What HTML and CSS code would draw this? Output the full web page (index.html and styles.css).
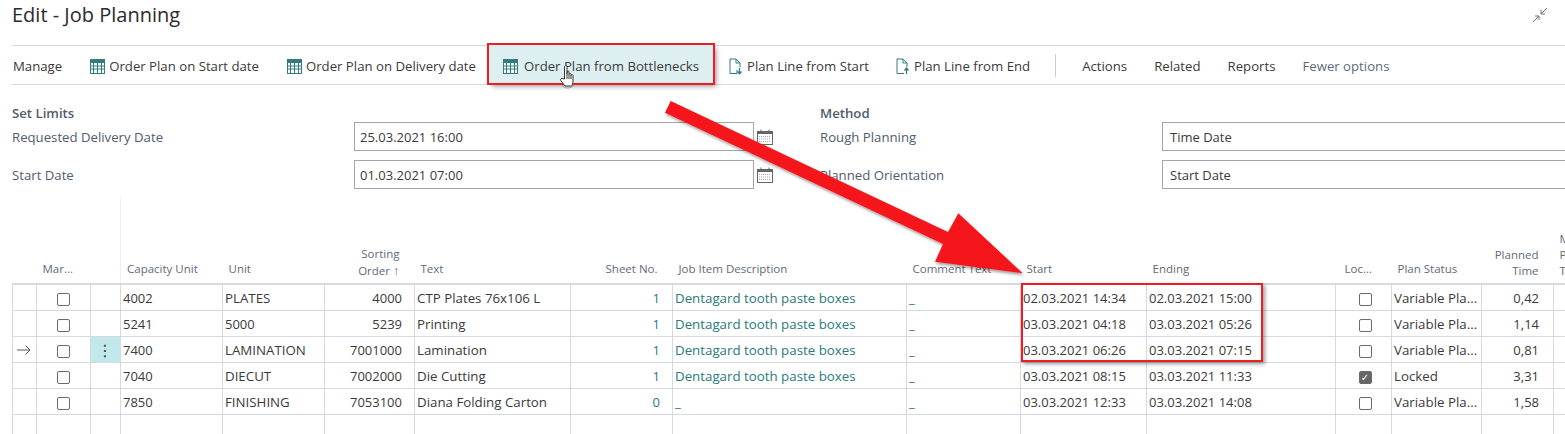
FILE: index.html
```html
<!DOCTYPE html>
<html lang="en">
<head>
    <meta charset="UTF-8">
    <meta name="viewport" content="width=device-width, initial-scale=1.0">
    <title>Edit - Job Planning</title>
    <link rel="stylesheet" href="styles.css">
</head>
<body>
    <div class="page">
        <header class="title-bar">
            <h1>Edit - Job Planning</h1>
            <svg class="collapse" width="18" height="18" viewBox="0 0 18 18">
                <path d="M10 8 L16 2 M10 4 V8 H14 M8 10 L2 16 M4 10 H8 V14" fill="none" stroke="#777" stroke-width="1"/>
            </svg>
        </header>

        <nav class="toolbar">
            <span class="tool tool-wide">Manage</span>
            <span class="tool tool-wide">
                <svg class="icon" width="15" height="15" viewBox="0 0 15 15"><use href="#grid"/></svg>
                Order Plan on Start date
            </span>
            <span class="tool tool-wide">
                <svg class="icon" width="15" height="15" viewBox="0 0 15 15"><use href="#grid"/></svg>
                Order Plan on Delivery date
            </span>
            <span class="tool tool-active">
                <svg class="icon" width="15" height="15" viewBox="0 0 15 15"><use href="#grid"/></svg>
                Order Plan from Bottlenecks
                <svg class="hand" width="18" height="26" viewBox="0 0 18 26">
                    <path d="M5.500 15 V3 C5.500 1 8 1 8 3 V10 V8 C8 6.500 10 6.500 10 8 V10.500 C10 9.200 12 9.200 12 10.500 V11.500 C12 10.400 14 10.400 14 11.500 V17 C14 20 13 21 12.500 22 H6 L1.800 16.500 C1 15 3 13.500 4 14.700 Z" fill="#fff" stroke="#333" stroke-width="1"/>
                    <path d="M8 10 V15 M10 10.500 V15 M12 11.500 V15" stroke="#333" stroke-width="1" fill="none"/>
                    <path d="M3 21 C5 25 12 25 15 21" stroke="#9a9a9a" stroke-width="1" fill="none"/>
                </svg>
            </span>
            <span class="tool">
                <svg class="icon" width="14" height="17" viewBox="0 0 14 17">
                    <path d="M8 12 V15.500 H1 V1 H7 L11 5 V9 M7 1 V5 H11" fill="none" stroke="#2f7d80" stroke-width="1"/>
                    <path d="M10.500 10 V15.500 M8.500 13.500 L10.500 15.800 L12.500 13.500" fill="none" stroke="#2f7d80" stroke-width="1.300"/>
                </svg>
                Plan Line from Start
            </span>
            <span class="tool">
                <svg class="icon" width="14" height="17" viewBox="0 0 14 17">
                    <path d="M8 15.500 H1 V1 H7 L11 5 V9 M7 1 V5 H11" fill="none" stroke="#2f7d80" stroke-width="1"/>
                    <path d="M10.500 16 V10.500 M8.500 12.500 L10.500 10 L12.500 12.500" fill="none" stroke="#2f7d80" stroke-width="1.300"/>
                </svg>
                Plan Line from End
            </span>
            <span class="tool-sep"></span>
            <span class="tool">Actions</span>
            <span class="tool">Related</span>
            <span class="tool">Reports</span>
            <span class="tool tool-muted">Fewer options</span>
        </nav>

        <section class="limits">
            <div class="group">
                <h2>Set Limits</h2>
                <div class="field">
                    <label>Requested Delivery Date</label>
                    <div class="input">25.03.2021 16:00</div>
                    <svg class="cal" width="18" height="18" viewBox="0 0 18 18"><use href="#calendar"/></svg>
                </div>
                <div class="field">
                    <label>Start Date</label>
                    <div class="input">01.03.2021 07:00</div>
                    <svg class="cal" width="18" height="18" viewBox="0 0 18 18"><use href="#calendar"/></svg>
                </div>
            </div>
            <div class="group">
                <h2>Method</h2>
                <div class="field">
                    <label>Rough Planning</label>
                    <div class="input input-wide">Time Date</div>
                </div>
                <div class="field">
                    <label>Planned Orientation</label>
                    <div class="input input-wide">Start Date</div>
                </div>
            </div>
        </section>

        <table class="lines">
            <colgroup>
                <col class="c24"><col class="c54"><col class="c30"><col class="c102"><col class="c102">
                <col class="c90"><col class="c156"><col class="c102"><col class="c234"><col class="c114">
                <col class="c126"><col class="c189"><col class="c56"><col class="c90"><col class="c72"><col class="c100">
            </colgroup>
            <thead>
                <tr>
                    <th></th>
                    <th>Mar...</th>
                    <th class="edge"></th>
                    <th>Capacity Unit</th>
                    <th>Unit</th>
                    <th class="num multi">Sorting<br>Order <span class="sort">↑</span></th>
                    <th>Text</th>
                    <th class="num">Sheet No.</th>
                    <th>Job Item Description</th>
                    <th>Comment Text</th>
                    <th>Start</th>
                    <th>Ending</th>
                    <th class="th-loc">Loc...</th>
                    <th>Plan Status</th>
                    <th class="num multi">Planned<br>Time</th>
                    <th class="multi">M<br>P<br>T</th>
                </tr>
            </thead>
            <tbody>
                <tr>
                    <td></td><td class="center"><span class="check"></span></td><td></td>
                    <td class="date">4002</td><td>PLATES</td><td class="num">4000</td><td>CTP Plates 76x106 L</td>
                    <td class="num link">1</td><td class="link">Dentagard tooth paste boxes</td><td class="link">_</td>
                    <td class="date">02.03.2021 14:34</td><td class="date">02.03.2021 15:00</td>
                    <td class="center loc"><span class="check"></span></td><td>Variable Pla...</td><td class="num time">0,42</td><td></td>
                </tr>
                <tr>
                    <td></td><td class="center"><span class="check"></span></td><td></td>
                    <td class="date">5241</td><td class="date">5000</td><td class="num">5239</td><td>Printing</td>
                    <td class="num link">1</td><td class="link">Dentagard tooth paste boxes</td><td class="link">_</td>
                    <td class="date">03.03.2021 04:18</td><td class="date">03.03.2021 05:26</td>
                    <td class="center loc"><span class="check"></span></td><td>Variable Pla...</td><td class="num time">1,14</td><td></td>
                </tr>
                <tr>
                    <td class="current">
                        <svg width="14" height="10" viewBox="0 0 14 10"><path d="M0 5 H13 M8.500 0.500 L13 5 L8.500 9.500" fill="none" stroke="#555" stroke-width="1"/></svg>
                    </td>
                    <td class="center"><span class="check"></span></td><td class="dots">⋮</td>
                    <td class="date">7400</td><td>LAMINATION</td><td class="num">7001000</td><td>Lamination</td>
                    <td class="num link">1</td><td class="link">Dentagard tooth paste boxes</td><td class="link">_</td>
                    <td class="date">03.03.2021 06:26</td><td class="date">03.03.2021 07:15</td>
                    <td class="center loc"><span class="check"></span></td><td>Variable Pla...</td><td class="num time">0,81</td><td></td>
                </tr>
                <tr>
                    <td></td><td class="center"><span class="check"></span></td><td></td>
                    <td class="date">7040</td><td>DIECUT</td><td class="num">7002000</td><td>Die Cutting</td>
                    <td class="num link">1</td><td class="link">Dentagard tooth paste boxes</td><td class="link">_</td>
                    <td class="date">03.03.2021 08:15</td><td class="date">03.03.2021 11:33</td>
                    <td class="center loc"><span class="check check-on">✓</span></td><td>Locked</td><td class="num time">3,31</td><td></td>
                </tr>
                <tr>
                    <td></td><td class="center"><span class="check"></span></td><td></td>
                    <td class="date">7850</td><td>FINISHING</td><td class="num">7053100</td><td>Diana Folding Carton</td>
                    <td class="num link">0</td><td class="link">_</td><td class="link">_</td>
                    <td class="date">03.03.2021 12:33</td><td class="date">03.03.2021 14:08</td>
                    <td class="center loc"><span class="check"></span></td><td>Variable Pla...</td><td class="num time">1,58</td><td></td>
                </tr>
                <tr>
                    <td></td><td></td><td></td><td></td><td></td><td></td><td></td><td></td>
                    <td></td><td></td><td></td><td></td><td></td><td></td><td></td><td></td>
                </tr>
            </tbody>
        </table>

        <!-- annotations drawn on top of the screenshot -->
        <div class="date-box"></div>
        <svg class="arrow" width="1565" height="434" viewBox="0 0 1565 434">
            <defs>
                <filter id="soft" x="-5%" y="-5%" width="110%" height="110%">
                    <feDropShadow dx="1" dy="2" stdDeviation="1.500" flood-color="#000" flood-opacity="0.4"/>
                </filter>
            </defs>
            <polygon filter="url(#soft)" fill="#f5161f" points="670.700,101 948,232 958.300,213.300 1022.700,273.300 935,261.700 943,244 665,112.700"/>
        </svg>
    </div>

    <svg class="defs" width="0" height="0">
        <symbol id="grid" viewBox="0 0 15 15">
            <rect x="0.500" y="0.500" width="14" height="14" fill="#fff" stroke="#2f7d80"/>
            <rect x="0" y="0" width="15" height="4" fill="#2f7d80"/>
            <path d="M0 7 H15 M0 10 H15 M3.500 4 V15 M7.500 4 V15 M11.500 4 V15" stroke="#2f7d80" stroke-width="1" fill="none"/>
        </symbol>
        <symbol id="calendar" viewBox="0 0 18 18">
            <rect x="1.500" y="3.500" width="15" height="13" fill="#fff" stroke="#666"/>
            <rect x="1" y="3" width="16" height="3" fill="#666"/>
            <path d="M5 1.500 V4 M13 1.500 V4" stroke="#666" stroke-width="1"/>
            <path d="M3 8.500 H15 M3 11 H15 M3 13.500 H15" stroke="#aaa" stroke-width="1" stroke-dasharray="1 1"/>
        </symbol>
    </svg>
</body>
</html>
```

FILE: styles.css
```css
/* page frame */
html, body {
    margin: 0;
    padding: 0;
    background-color: #fff;
}

body {
    font-family: "Open Sans", "Noto Sans", sans-serif;
    font-size: 13.2px;
    color: #3a3a3a;
}

.page {
    position: relative;
    width: 1565px;
    height: 434px;
    overflow: hidden;
}

.defs {
    position: absolute;
}

/* title */
.title-bar {
    display: flex;
    justify-content: space-between;
    align-items: flex-start;
    height: 45px;
    padding: 0 16px 0 12px;
    box-sizing: border-box;
}

h1 {
    margin: 0;
    font-size: 20px;
    font-weight: 400;
    line-height: 30px;
    color: #2b2b2b;
}

.collapse {
    margin-top: 6px;
}

/* action bar */
.toolbar {
    display: flex;
    align-items: center;
    height: 38px;
    margin-left: 12px;
    padding-left: 1px;
    border-top: 1px solid #d6d8da;
    border-bottom: 1px solid #d6d8da;
}

.tool {
    display: flex;
    align-items: center;
    gap: 4px;
    margin-right: 27px;
    padding-top: 2px;
    white-space: nowrap;
}

.tool-wide {
    margin-right: 28px;
}

.tool-active {
    position: relative;
    box-sizing: border-box;
    gap: 6px;
    height: 38px;
    margin: -2px 16px 0 -15px;
    padding: 4px 14px 0;
    background-color: #deeff1;
    outline: 2px solid #ee1c25;
    box-shadow: 3px 3px 5px rgba(0, 0, 0, 0.45);
}

.hand {
    position: absolute;
    left: 70px;
    top: 19px;
}

.tool-sep {
    width: 1px;
    height: 23px;
    margin: 0 26px 0 -2px;
    background-color: #c8cacc;
}

.tool-muted {
    color: #5f6b78;
}

/* limits form */
.limits {
    display: flex;
    padding: 19px 0 0 12px;
}

.group {
    width: 808px;
    flex-shrink: 0;
}

h2 {
    margin: 0;
    font-size: 13.2px;
    font-weight: 600;
    line-height: 18px;
    color: #505c6d;
}

.field {
    display: flex;
    align-items: center;
    height: 29px;
    margin-bottom: 9px;
}

.field label {
    width: 342px;
    flex-shrink: 0;
    color: #505c6d;
}

.input {
    width: 400px;
    height: 29px;
    box-sizing: border-box;
    padding-left: 5px;
    font-size: 13px;
    line-height: 29px;
    border: 1px solid #a6a6a6;
    flex-shrink: 0;
}

.input-wide {
    width: 420px;
    padding-left: 7px;
}

.cal {
    margin-left: 2px;
}

/* job lines table */
.lines {
    margin: -1px 0 0 12px;
    table-layout: fixed;
    border-collapse: collapse;
    width: 1641px;
}

.c24 { width: 24px; }
.c30 { width: 30px; }
.c54 { width: 54px; }
.c56 { width: 56px; }
.c72 { width: 72px; }
.c90 { width: 90px; }
.c100 { width: 100px; }
.c102 { width: 102px; }
.c114 { width: 114px; }
.c126 { width: 126px; }
.c156 { width: 156px; }
.c189 { width: 189px; }
.c234 { width: 234px; }

.lines thead tr {
    height: 87px;
}

.lines th {
    padding: 0 6px 6px;
    font-size: 11.5px;
    font-weight: 400;
    line-height: 16px;
    text-align: left;
    vertical-align: bottom;
    color: #5f6b78;
    white-space: nowrap;
    overflow: hidden;
    border-bottom: 2px solid #d6d9de;
}

.lines th.edge {
    border-right: 1px solid #eceef0;
}

.lines th.num {
    padding-right: 15px;
    text-align: right;
}

.lines th.multi {
    padding-bottom: 4px;
}

.lines th.th-loc {
    padding-left: 9px;
}

.sort {
    font-size: 13px;
}

.lines tbody tr {
    height: 26px;
}

.lines td {
    padding: 2px 3px 0 2px;
    font-size: 13.3px;
    white-space: nowrap;
    overflow: hidden;
    border: 1px solid #d6d9de;
    border-top: 0;
}

.lines td.num {
    padding-right: 12px;
    font-size: 13px;
    text-align: right;
}

.lines td.time {
    padding-right: 14px;
}

.lines td.date {
    font-size: 13px;
}

.lines td.center {
    text-align: center;
}

.lines td.loc {
    padding-left: 6px;
}

.link {
    color: #2b7a7c;
}

.lines td.current {
    text-align: center;
}

.lines td.dots {
    text-align: center;
    font-family: "DejaVu Sans", sans-serif;
    font-size: 16px;
    background-color: #c1e8ea;
}

.check {
    display: inline-block;
    width: 11px;
    height: 11px;
    border: 1px solid #6b6b6b;
    border-radius: 2px;
    vertical-align: middle;
    background-color: #fff;
}

.check-on {
    background-color: #666;
    color: #fff;
    font-family: "DejaVu Sans", sans-serif;
    font-size: 10px;
    font-weight: 700;
    line-height: 11px;
    text-align: center;
}

/* red annotations */
.date-box {
    position: absolute;
    left: 1021px;
    top: 283px;
    width: 238px;
    height: 75px;
    border: 2px solid #ee1c25;
    box-shadow: 2px 2px 4px rgba(0, 0, 0, 0.4);
}

.arrow {
    position: absolute;
    left: 0;
    top: 0;
    pointer-events: none;
}
```
